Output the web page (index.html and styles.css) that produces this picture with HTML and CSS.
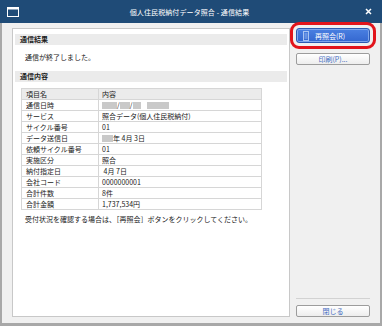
FILE: index.html
```html
<!DOCTYPE html>
<html lang="ja">
<head>
    <meta charset="UTF-8">
    <title>個人住民税納付データ照合 - 通信結果</title>
    <link rel="stylesheet" href="styles.css">
</head>

<body>
    <div class="window">
        <div class="titlebar">
            <div class="title-icon">
                <svg width="12" height="10" viewBox="0 0 12 10">
                    <rect x="0.5" y="0.5" width="11" height="9" fill="none" stroke="#ffffff" stroke-width="1"/>
                    <rect x="0.5" y="0.5" width="11" height="2" fill="#ffffff"/>
                </svg>
            </div>
            <div class="title-text">個人住民税納付データ照合 - 通信結果</div>
            <div class="title-close">
                <svg width="7" height="7" viewBox="0 0 7 7">
                    <path d="M1 1 L6 6 M6 1 L1 6" stroke="#ffffff" stroke-width="1.5"/>
                </svg>
            </div>
        </div>

        <div class="body">
            <div class="main">
                <div class="section-head">通信結果</div>
                <p class="message">通信が終了しました。</p>

                <div class="section-head">通信内容</div>
                <table class="detail">
                    <tr class="head-row"><td>項目名</td><td>内容</td></tr>
                    <tr><td>通信日時</td><td><span class="mask w15"></span>/<span class="mask w10"></span>/<span class="mask w8"></span> <span class="mask w22"></span></td></tr>
                    <tr><td>サービス</td><td>照合データ(個人住民税納付)</td></tr>
                    <tr><td>サイクル番号</td><td>01</td></tr>
                    <tr><td>データ送信日</td><td><span class="mask w11"></span>年 4月 3日</td></tr>
                    <tr><td>依頼サイクル番号</td><td>01</td></tr>
                    <tr><td>実施区分</td><td>照合</td></tr>
                    <tr><td>納付指定日</td><td>&nbsp;4月 7日</td></tr>
                    <tr><td>会社コード</td><td>0000000001</td></tr>
                    <tr><td>合計件数</td><td>8件</td></tr>
                    <tr><td>合計金額</td><td>1,737,534円</td></tr>
                </table>
                <p class="note">受付状況を確認する場合は、［再照会］ボタンをクリックしてください。</p>
            </div>

            <div class="side">
                <button class="btn btn-primary">
                    <svg class="btn-icon" width="6" height="10" viewBox="0 0 6 10">
                        <rect x="0.5" y="0.5" width="5" height="9" fill="none" stroke="#a9c4f2" stroke-width="1"/>
                        <path d="M1.5 3 H4.5 M1.5 5 H4.5 M1.5 7 H4.5" stroke="#a9c4f2" stroke-width="0.8"/>
                    </svg>
                    <span>再照会(R)</span>
                </button>
                <button class="btn btn-print">印刷(P)...</button>

                <div class="side-bottom">
                    <div class="separator"></div>
                    <button class="btn">閉じる</button>
                </div>
            </div>
        </div>
    </div>
</body>
</html>
```

FILE: styles.css
```css
html, body {
    margin: 0;
    padding: 0;
    background-color: #ffffff;
    font-family: "Noto Sans CJK JP", "Noto Sans", sans-serif;
    font-size: 7px;
    color: #1a1a1a;
}

.window {
    width: 382px;
    height: 326px;
    box-sizing: border-box;
    display: flex;
    flex-direction: column;
    background-color: #f0f0f0;
    border-left: 2px solid #a8a8a8;
    border-right: 2px solid #a8a8a8;
    border-bottom: 3px solid #a8a8a8;
}

.titlebar {
    height: 23px;
    margin: 0 -2px;
    background-color: #1f4b77;
    color: #ffffff;
    display: grid;
    grid-template-columns: 1fr auto 1fr;
    align-items: center;
    padding: 0 10px 0 7px;
}

.title-icon svg,
.title-close svg {
    display: block;
}

.title-close {
    justify-self: end;
}

.title-text {
    font-size: 7px;
    letter-spacing: 0.1px;
}

.body {
    flex: 1;
    display: flex;
    gap: 6px;
    padding: 5px 8px 6px 10px;
}

.main {
    width: 278px;
    box-sizing: border-box;
    background-color: #ffffff;
    border: 1px solid #c8c8c8;
    padding: 5px 2px;
}

.section-head {
    height: 11px;
    line-height: 11px;
    background-color: #ebebeb;
    padding-left: 5px;
    font-weight: bold;
}

.message {
    margin: 7px 0 8px 10px;
    line-height: 11px;
}

.detail {
    margin: 6px 0 0 6px;
    width: 241px;
    border-collapse: collapse;
}

.detail td {
    height: 10px;
    padding: 0 0 0 3px;
    border: 1px solid #d6d6d6;
    line-height: 10px;
    white-space: nowrap;
}

.detail td:first-child {
    width: 72px;
    padding-left: 4px;
}

.detail .head-row td {
    background-color: #ebebeb;
}

.mask {
    display: inline-block;
    height: 7px;
    vertical-align: -1px;
    background-color: #c9c9c9;
}

.w8 { width: 8px; }
.w10 { width: 10px; }
.w11 { width: 11px; }
.w15 { width: 15px; }
.w22 { width: 22px; margin-left: 5px; }

.note {
    margin: 4px 0 0 10px;
    line-height: 11px;
}

.side {
    width: 74px;
    display: flex;
    flex-direction: column;
}

.btn {
    width: 100%;
    box-sizing: border-box;
    height: 12px;
    padding: 0;
    font-family: inherit;
    font-size: 7px;
    line-height: 10px;
    color: #3f6cc0;
    background: linear-gradient(#ffffff, #ededed);
    border: 1px solid #9c9c9c;
    border-radius: 2px;
    display: flex;
    align-items: center;
    justify-content: center;
}

.btn-primary {
    height: 15px;
    color: #ffffff;
    background: linear-gradient(#4a80e2, #3467cf);
    border-color: #2c59b2;
    box-shadow: inset 0 0 0 1px #7ea6ec;
    justify-content: flex-start;
    gap: 6px;
    padding-left: 6px;
    outline: 3px solid #e2141b;
    outline-offset: 3px;
    border-radius: 3px;
}

.btn-icon {
    display: block;
}

.btn-print {
    margin-top: 10px;
}

.side-bottom {
    margin-top: auto;
}

.separator {
    height: 1px;
    background-color: #d2d2d2;
    margin-bottom: 6px;
}
```
